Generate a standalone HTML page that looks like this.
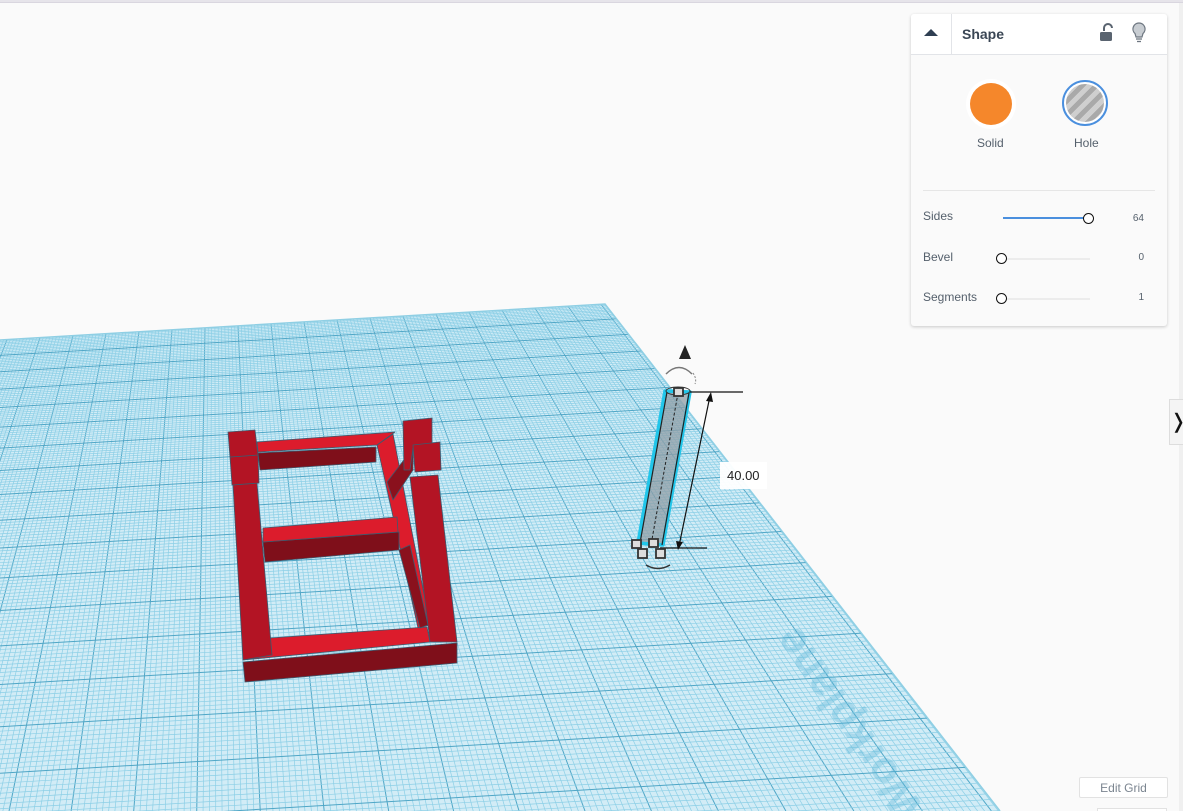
<!DOCTYPE html>
<html><head><meta charset="utf-8"><style>
html,body{margin:0;padding:0;width:1183px;height:811px;overflow:hidden;background:#fafafa;font-family:"Liberation Sans",sans-serif;position:relative;}
svg{overflow:hidden}
#top{position:absolute;left:0;top:0;width:1183px;height:2px;background:#e6e4ea;border-bottom:1px solid #d9d6df;}
#strip{position:absolute;left:1179px;top:3px;width:4px;height:808px;background:#f0f0f0;}
#panel{position:absolute;left:911px;top:14px;width:256px;height:312px;background:#fafafa;border-radius:3px;box-shadow:0 1px 3px rgba(0,0,0,.2);}
#hdr{position:absolute;left:0;top:0;width:256px;height:40px;background:#fff;border-bottom:1px solid #e2e4e8;border-radius:3px 3px 0 0;}
.lbl{position:absolute;font-size:12px;color:#55606c;}
.val{position:absolute;font-size:10px;color:#55606c;text-align:right;width:20px;}
.knob{position:absolute;width:9px;height:9px;border:1.5px solid #111;border-radius:50%;background:#fff;}
.track{position:absolute;height:2px;background:#ececec;}
</style></head><body>
<svg width="1183" height="811" style="position:absolute;left:0;top:0">
<defs><clipPath id="wp"><polygon points="0,340 605,304 1000,811 0,811"/></clipPath></defs>
<polygon points="0,340 605,304 1000,811 0,811" fill="#d2ecf6"/>
<g id="grid" clip-path="url(#wp)"></g>
<g clip-path="url(#wp)"><text x="925" y="808" transform="rotate(-125 925 808)" font-size="44" font-weight="bold" fill="#5bb6d6" opacity="0.35" font-family="Liberation Sans,sans-serif">Workplane</text></g>
<polyline points="0,340 605,304 1000,811" fill="none" stroke="#8fcfe4" stroke-width="1.5"/>
<g stroke="#3d5a6e" stroke-width="0.8" stroke-linejoin="round">
<polygon points="243,662 457,643 457,663 245,682" fill="#7f0f1a"/>
<polygon points="377,445 393,434 430,625 418,628" fill="#dc1c2c"/>
<polygon points="270,638 427,627 430,642 243,660" fill="#dc1c2c"/>
<polygon points="399,550 410,545 428,625 420,628" fill="#8a111d"/>
<polygon points="410,477 438,475 457,642 430,642" fill="#b31424"/>
<polygon points="263,542 399,532 399,550 265,562" fill="#7f0f1a"/>
<polygon points="263,528 397,517 398,532 263,542" fill="#dc1c2c"/>
<polygon points="258,453 376,447 376,462 260,470" fill="#7f0f1a"/>
<polygon points="257,442 395,432 377,445 258,452" fill="#dc1c2c"/>
<polygon points="387,482 413,448 413,470 393,500" fill="#8a111d"/>
<polygon points="403,421 432,418 432,445 413,448 410,470 404,470" fill="#b31424"/>
<polygon points="413,445 440,442 441,470 415,472" fill="#b31424"/>
<polygon points="233,485 257,483 272,655 243,660" fill="#b31424"/>
<polygon points="230,457 258,455 259,483 232,485" fill="#b31424"/>
<polygon points="228,432 255,430 258,455 230,457" fill="#b31424"/>
</g>
<polygon points="665,391 690,392 663,545 638,543" fill="#8f9ea6" fill-opacity="0.75" stroke="#22c6ea" stroke-width="3.5" stroke-linejoin="round"/>
<line x1="667" y1="392" x2="640" y2="543" stroke="#222" stroke-width="1.2"/>
<line x1="689" y1="393" x2="662" y2="545" stroke="#222" stroke-width="1.2"/>
<ellipse cx="678" cy="391" rx="12" ry="4" fill="none" stroke="#333" stroke-width="1"/>
<line x1="678" y1="393" x2="651" y2="545" stroke="#222" stroke-width="1" stroke-dasharray="3,2"/>
<line x1="690" y1="392" x2="743" y2="392" stroke="#111" stroke-width="1.3"/>
<line x1="660" y1="548" x2="707" y2="548" stroke="#111" stroke-width="1.3"/>
<line x1="710" y1="396" x2="679" y2="546" stroke="#111" stroke-width="1.2"/>
<polygon points="711,392 706,401 713,402" fill="#111"/>
<polygon points="678,550 676,541 683,542" fill="#111"/>
<rect x="720" y="462" width="47" height="27" fill="#fff" opacity="0.95"/>
<text x="727" y="480" font-size="13" fill="#222" font-family="Liberation Sans,sans-serif">40.00</text>
<polygon points="685,345 679,359 691,359" fill="#222"/>
<path d="M666,374 Q679,361 692,374" fill="none" stroke="#777" stroke-width="1.5"/>
<path d="M693,373 Q697,379 695,384" fill="none" stroke="#888" stroke-width="1" stroke-dasharray="2,1.5"/>
<path d="M646,565 Q658,572 670,565" fill="none" stroke="#333" stroke-width="1.5"/>
<g fill="#ddd" stroke="#333" stroke-width="1.8">
<rect x="674" y="388" width="9" height="8"/>
<rect x="632" y="540" width="9" height="8"/>
<rect x="649" y="539" width="9" height="8"/>
<rect x="638" y="549" width="9" height="9"/>
<rect x="656" y="549" width="9" height="9"/>
</g>
</svg>
<div id="top"></div>
<div id="strip"></div>
<div style="position:absolute;left:1169px;top:399px;width:14px;height:46px;background:#f4f4f4;border:1px solid #ddd;border-right:none;font-size:20px;line-height:44px;color:#111;text-align:center;box-sizing:border-box;">&#x276D;</div>
<div style="position:absolute;left:1079px;top:777px;width:89px;height:21px;background:#fff;border:1px solid #e2e2e2;border-radius:2px;font-size:12px;color:#7b8590;text-align:center;line-height:20px;box-sizing:border-box;">Edit Grid</div>
<div style="position:absolute;left:1097px;top:808px;width:70px;height:3px;background:#fff;border:1px solid #e2e2e2;border-bottom:none;box-sizing:border-box;"></div>
<div id="panel">
 <div id="hdr">
  <svg style="position:absolute;left:12px;top:14px" width="16" height="10"><polygon points="8,1 15,8 1,8" fill="#2f3f52"/></svg>
  <div style="position:absolute;left:40px;top:0;width:1px;height:40px;background:#e2e4e8"></div>
  <div style="position:absolute;left:51px;top:12px;font-size:14px;font-weight:bold;color:#3a4654;">Shape</div>
  <svg style="position:absolute;left:188px;top:9px" width="16" height="20"><path d="M5,8 V5 a4,4 0 0 1 8,0" fill="none" stroke="#5a6470" stroke-width="2"/><rect x="1" y="9" width="12" height="9" rx="1.5" fill="#5a6470"/></svg>
  <svg style="position:absolute;left:220px;top:8px" width="16" height="22"><path d="M8,1 a6,6 0 0 1 4,10.5 L11,15 H5 L4,11.5 A6,6 0 0 1 8,1z" fill="#c8cdd2" stroke="#6d7680" stroke-width="1.2"/><line x1="5" y1="17" x2="11" y2="17" stroke="#6d7680" stroke-width="1.3"/><line x1="6" y1="19.5" x2="10" y2="19.5" stroke="#6d7680" stroke-width="1.3"/></svg>
 </div>
 <div style="position:absolute;left:55px;top:65px;width:50px;height:50px;border-radius:50%;background:#fff"></div>
 <div style="position:absolute;left:59px;top:69px;width:42px;height:42px;border-radius:50%;background:#f5872b"></div>
 <div class="lbl" style="left:66px;top:122px;">Solid</div>
 <div style="position:absolute;left:151px;top:66px;width:46px;height:46px;border-radius:50%;border:2px solid #4a8fde;box-sizing:border-box;background:#fff"></div>
 <div style="position:absolute;left:155px;top:70px;width:38px;height:38px;border-radius:50%;background:repeating-linear-gradient(135deg,#a9a9a9 0 5px,#cfcfcf 5px 10px)"></div>
 <div class="lbl" style="left:163px;top:122px;">Hole</div>
 <div style="position:absolute;left:12px;top:176px;width:232px;height:1px;background:#e6e6e6"></div>
 <div class="lbl" style="left:12px;top:195px;">Sides</div>
 <div style="position:absolute;left:92px;top:203px;width:85px;height:2px;background:#4a8fde"></div>
 <div class="knob" style="left:172px;top:199px;"></div>
 <div class="val" style="left:213px;top:199px;">64</div>
 <div class="lbl" style="left:12px;top:236px;">Bevel</div>
 <div class="track" style="left:92px;top:244px;width:87px;"></div>
 <div class="knob" style="left:85px;top:239px;"></div>
 <div class="val" style="left:213px;top:238px;">0</div>
 <div class="lbl" style="left:12px;top:276px;">Segments</div>
 <div class="track" style="left:92px;top:284px;width:87px;"></div>
 <div class="knob" style="left:85px;top:279px;"></div>
 <div class="val" style="left:213px;top:278px;">1</div>
</div>
<script>
(function(){
var g=document.getElementById('grid'),ns='http://www.w3.org/2000/svg';
function L(x1,y1,x2,y2,c,w){var l=document.createElementNS(ns,'line');l.setAttribute('x1',x1);l.setAttribute('y1',y1);l.setAttribute('x2',x2);l.setAttribute('y2',y2);l.setAttribute('stroke',c);l.setAttribute('stroke-width',w);g.appendChild(l);}
var vx=214,vy=-198,N=10;
for(var i=-800;i<=1400;i++){var x=40+i*3.3,yt=340-0.0595*x;var dx=x-vx,dy=yt-vy;var t=(811-vy)/dy;var major=(i%N==0);
L(vx+dx*((yt-5-vy)/dy),yt-5,vx+dx*t,811,major?'#4fa6c6':'#8ccfe6',major?1:0.7);}
var u0=1/(340+198),du=15/(538*538)/N;
for(var k=0;k<800;k++){var u=u0-k*du;var y=1/u-198;if(y>900)break;var major=(k%N==0);
L(0,y,1100,y-1100*0.0595,major?'#4fa6c6':'#8ccfe6',major?1:0.7);}
})();
</script>
</body></html>
